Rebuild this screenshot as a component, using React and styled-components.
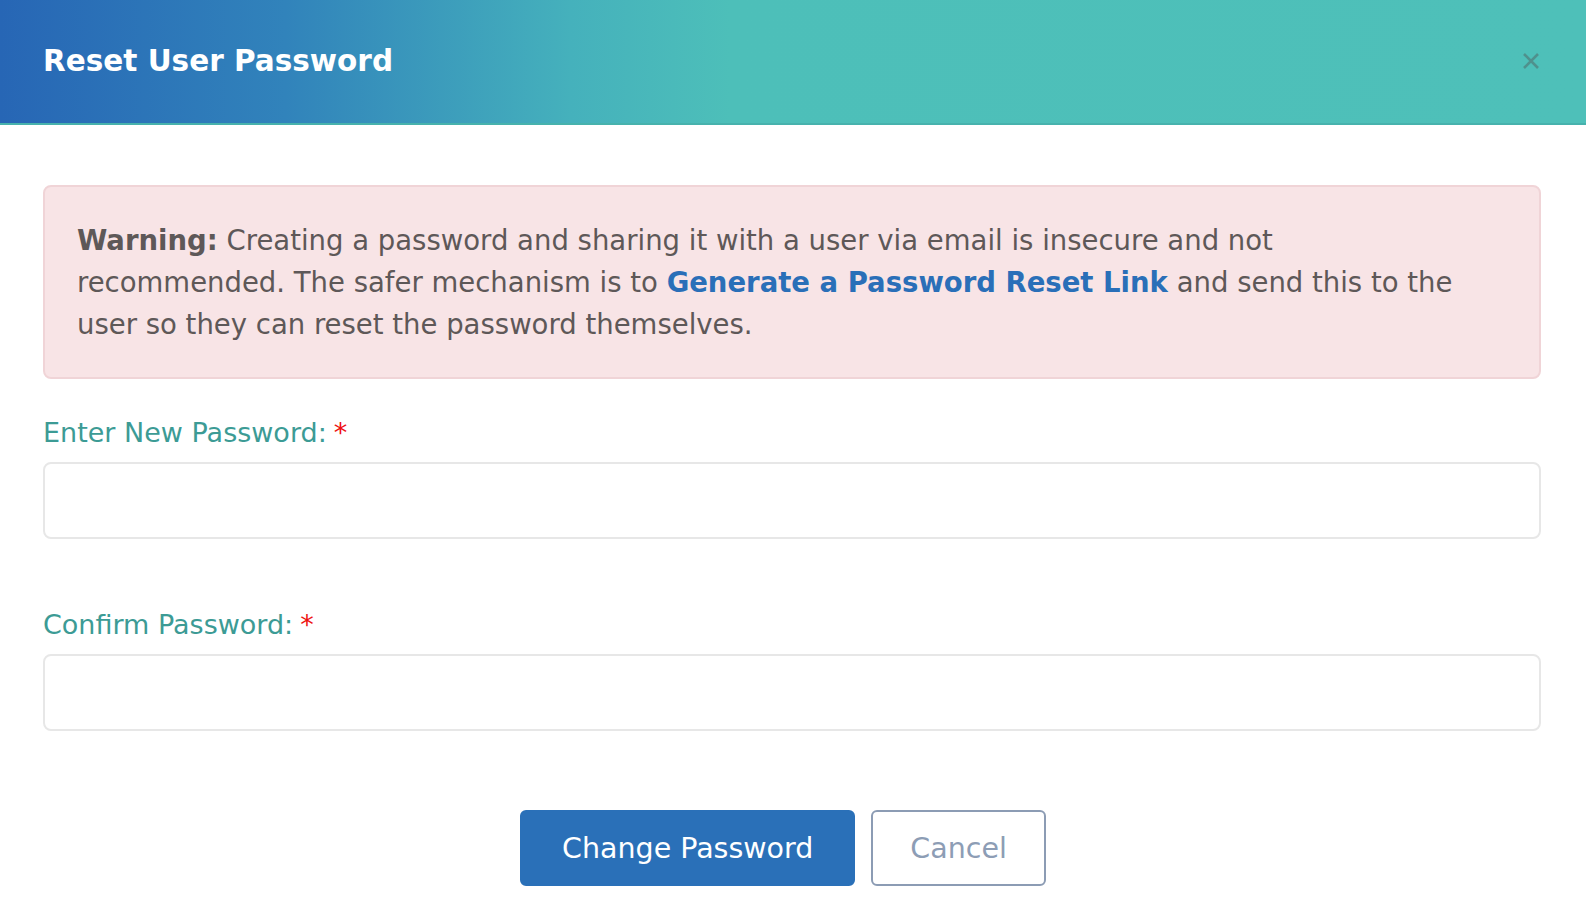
import React from 'react'
import styled, { createGlobalStyle } from 'styled-components'

const GlobalStyle = createGlobalStyle`
    body {
        margin: 0;
        background: #ffffff;
        font-family: 'DejaVu Sans', 'Noto Sans', sans-serif;
    }
`

const App = () => {
    return (
        <>
            <GlobalStyle />
            <Modal>
                <Header>
                    <Title>Reset User Password</Title>
                    <CloseButton aria-label="Close">
                        <svg width="18" height="18" viewBox="0 0 18 18">
                            <path d="M2 2 L16 16 M16 2 L2 16" stroke="currentColor" strokeWidth="2.6" />
                        </svg>
                    </CloseButton>
                </Header>
                <Body>
                    <Alert>
                        <strong>Warning:</strong> Creating a password and sharing it with a user via email is insecure and not<br />
                        recommended. The safer mechanism is to <AlertLink href="#">Generate a Password Reset Link</AlertLink> and send this to the<br />
                        user so they can reset the password themselves.
                    </Alert>

                    <Field>
                        <Label>Enter New Password:<Required>*</Required></Label>
                        <Input type="password" />
                    </Field>

                    <Field $spaced>
                        <Label>Confirm Password:<Required>*</Required></Label>
                        <Input type="password" />
                    </Field>

                    <Actions>
                        <Button $primary>Change Password</Button>
                        <Button>Cancel</Button>
                    </Actions>
                </Body>
            </Modal>
        </>
    )
}

export default App

const Modal = styled.div`
    display: flex;
    flex-direction: column;
    width: 100%;
    min-height: 914px;
    background: #ffffff;
`

const Header = styled.div`
    display: flex;
    align-items: center;
    justify-content: space-between;
    height: 125px;
    padding: 0 46px 1px 43px;
    box-sizing: border-box;
    background: linear-gradient(90deg, #2766b5 0%, #3183bb 18%, #45b1bc 36%, #4dbfb9 46%, #4ec0b9 100%);
    border-bottom: 2px solid #47b2ad;
`

const Title = styled.h1`
    margin: 0;
    color: #ffffff;
    font-size: 29.5px;
    font-weight: 700;
`

const CloseButton = styled.button`
    display: flex;
    align-items: center;
    justify-content: center;
    padding: 0;
    border: none;
    background: transparent;
    color: #4f918d;
    cursor: pointer;
`

const Body = styled.div`
    display: flex;
    flex-direction: column;
    padding: 60px 45px 28px 43px;
`

const Alert = styled.div`
    padding: 32px 32px;
    background: #f8e4e6;
    border: 2px solid #f0d4d7;
    border-radius: 8px;
    color: #5e5858;
    font-size: 27.5px;
    line-height: 42px;

    strong {
        font-weight: 700;
    }
`

const AlertLink = styled.a`
    color: #2a6fb8;
    font-weight: 700;
    text-decoration: none;
`

const Field = styled.div`
    display: flex;
    flex-direction: column;
    gap: 9px;
    margin-top: ${(p) => (p.$spaced ? '66px' : '34px')};
`

const Label = styled.label`
    color: #3c9b95;
    font-size: 27px;
    line-height: 40px;
`

const Required = styled.span`
    margin-left: 7px;
    color: #ee1111;
`

const Input = styled.input`
    box-sizing: border-box;
    width: 100%;
    height: 77px;
    padding: 0 20px;
    border: 2px solid #e7e7e7;
    border-radius: 8px;
    background: #ffffff;
    font-family: inherit;
    font-size: 27px;
    outline: none;
`

const Actions = styled.div`
    display: flex;
    justify-content: center;
    gap: 16px;
    margin-top: 79px;
    padding-right: 18px;
`

const Button = styled.button`
    box-sizing: border-box;
    height: 76px;
    padding: 0 ${(p) => (p.$primary ? '40px' : '37px')};
    border: 2px solid ${(p) => (p.$primary ? '#2a70b8' : '#8c9cb4')};
    border-radius: 6px;
    background: ${(p) => (p.$primary ? '#2a70b8' : '#ffffff')};
    color: ${(p) => (p.$primary ? '#ffffff' : '#8d9db5')};
    font-family: inherit;
    font-size: 28.5px;
    font-weight: 400;
    cursor: pointer;
`
